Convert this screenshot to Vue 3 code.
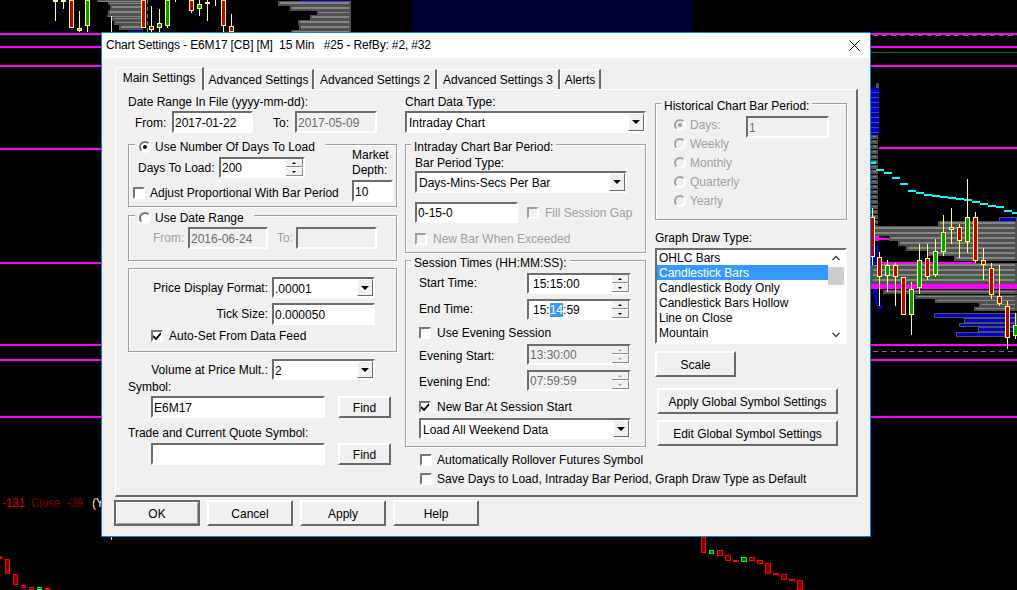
<script setup>
const titleText = 'Chart Settings - E6M17 [CB] [M]  15 Min   #25 - RefBy: #2, #32'
const rects = []
const add = (x, y, w, h, f) => rects.push({ x, y, w, h, f })

const grayBar = (x, y, r, h = 5) => {
  add(x, y, r - x, h, '#505050')
  add(x + 2, y + 1, r - x - 4, Math.max(1, h - 3), '#858585')
}

// top profiles
add(412, 0, 280, 32, '#000033')
;[[97,0,2],[108,2,3],[110,5,5],[108,10,5],[107,15,2],[112,17,4],[114,21,4],[119,25,5]].forEach(([x,y,h]) => grayBar(x,y,143,h))
add(128, 31, 15, 1, '#0000c8')
;[[278,1,5],[290,6,5],[317,11,4],[310,15,5],[298,20,5],[299,25,5],[291,30,2]].forEach(([x,y,h]) => grayBar(x,y,351,h))
add(300, 0, 50, 1, '#0000c8')
add(111, 16, 1, 16, '#e0e0e0')

// right profile
for (let y = 88; y < 135; y += 5) { add(871, y, 8, 4, '#0000c8'); add(871, y + 4, 8, 1, '#505050') }
add(876, 83, 3, 5, '#505050')
for (let y = 135; y < 226; y += 5) grayBar(871, y, 878, 4)
;[[938,221],[871,226],[871,231],[889,236],[898,241],[906,246],[927,251],[954,256]].forEach(([x,y]) => grayBar(x,y,1017))
for (let y = 263; y < 284; y += 5) grayBar(871, y, 1017)
;[[883,290],[915,295],[935,299],[979,303],[974,307]].forEach(([x,y]) => grayBar(x,y,1017,4))
for (let y = 246; y < 263; y += 5) { add(871, y, 8, 4, '#0000c8') }
;[[873,290],[874,295],[875,300],[877,305]].forEach(([x,y]) => add(x, y, 5, 4, '#0000c8'))
;[[999,217,1017,5],[934,313,1017,5],[964,318,1017,5],[959,323,1017,4],[978,327,1017,5],[956,332,1005,5]].forEach(([x,y,r,h]) => {
  add(x, y, r - x, h, '#505050')
  add(x + 1, y + 1, r - x - 2, h - 2, '#0000d0')
})

// magenta and green lines
;[33,46,65,148,262,344,359,416].forEach(y => add(0, y, 101, 2, '#ff00ff'))
;[33,46,65,344,359,416].forEach(y => add(871, y, 146, 2, '#ff00ff'))
add(879, 147, 138, 2, '#ff00ff')
add(871, 52, 146, 1, '#008000')
add(871, 236, 8, 5, '#ff00ff')
add(879, 238, 10, 2, '#ff00ff')
add(882, 262, 94, 2, '#ff00ff')
add(871, 284, 146, 5, '#ff00ff')
add(871, 277, 146, 1, '#208020')

// cyan dashes
;[[871,162,5],[876,169,8],[884,172,8],[892,177,8],[900,183,8],[908,190,8],[916,192,8],[924,194,8],[932,195,8],[940,196,8],[948,197,8],[956,198,8],[964,199,8],[972,201,8],[980,203,8],[988,205,8],[996,206,8],[1004,210,8],[1012,212,5]].forEach(([x,y,w]) => add(x, y, w, 2, '#00ffff'))

// candles
const candle = (cx, t, b, wt, wb, f, edge = '#ffff80') => {
  if (wt != null) add(cx, wt, 1, wb - wt, edge)
  add(cx - 2, t, 5, b - t, edge)
  if (b - t > 2) add(cx - 1, t + 1, 3, b - t - 2, f)
}
const R = '#c00000', G = '#00a000'
;[
  [872,217,257,208,265,R],[879,257,277,252,306,R],[887,265,276,260,292,G],[895,265,277,263,306,R],[903,277,315,null,null,R],
  [911,289,315,282,335,G],[919,260,288,244,294,G],[927,258,277,244,280,R],[935,251,275,239,277,G],[943,232,252,215,256,G],
  [951,227,230,208,244,G],[959,227,241,224,258,R],[967,217,242,179,253,G],[975,217,261,212,263,R],[983,260,265,248,280,R],
  [991,268,295,263,299,R],[999,296,304,265,306,R],[1007,306,338,301,349,R],[1015,325,336,313,339,G],
  [55,0,2,0,21,R],[63,0,2,0,9,G],[71,0,28,null,null,R],[79,28,31,11,32,'#c0c000'],[87,0,26,0,32,G],
  [143,0,28,null,null,R],[151,26,30,6,32,R],[159,23,28,9,32,G],[167,0,26,0,28,G],[191,0,11,0,13,R],[199,4,9,0,16,G],
  [207,2,4,0,21,'#c0c000'],[223,0,26,0,32,R],[231,26,32,14,32,R]
].forEach(c => candle(...c))
add(175, 0, 1, 2, '#ffff80')
add(215, 0, 1, 6, '#ffff80')

// lower candles (no yellow outline)
const low = (x, y, w, h, edge, f) => {
  add(x, y, w, h, edge)
  if (h > 2) add(x + 1, y + 1, w - 2, h - 2, f)
}
;[
  [0,556,2,3,'#f00','#400000'],[5,559,5,15,'#f00','#800000'],[13,574,5,11,'#f00','#800000'],[21,585,5,3,'#f00','#400000'],[29,587,5,3,'#f00','#400000'],
  [37,587,5,3,'#0f0','#006000'],[45,588,5,2,'#f00','#400000'],
  [701,537,5,16,'#f00','#800000'],[709,550,5,4,'#0f0','#006000'],[717,550,6,6,'#f00','#600000'],[725,555,6,6,'#f00','#600000'],[733,560,6,2,'#f00','#600000'],
  [741,557,6,5,'#0f0','#006000'],[749,557,6,4,'#f00','#600000'],[757,560,6,4,'#f00','#600000'],[765,563,6,11,'#f00','#800000'],[773,573,6,2,'#f00','#600000'],
  [781,574,6,6,'#f00','#600000'],[789,579,6,2,'#f00','#600000'],[797,580,6,10,'#f00','#800000']
].forEach(c => low(...c))
add(111, 537, 1, 3, '#e0e0e0')
</script>

<template>
  <div class="scene">
    <svg class="chart" width="1017" height="590" shape-rendering="crispEdges">
      <rect v-for="(r, i) in rects" :key="i" :x="r.x" :y="r.y" :width="r.w" :height="r.h" :fill="r.f" />
      <line x1="147" y1="0" x2="147" y2="32" stroke="#808080" stroke-dasharray="4 3" />
      <line x1="873" y1="35.5" x2="1017" y2="35.5" stroke="#707070" stroke-dasharray="5 4" />
      <line x1="873" y1="351.5" x2="1015" y2="351.5" stroke="#707070" stroke-dasharray="5 4" />
    </svg>

    <div class="legend"><span class="lg-red">-131</span><span class="lg-dark">Close: -39</span><span class="lg-y">(Y</span></div>

    <div class="dialog">
      <div class="titlebar">
        <span class="title">{{ titleText }}</span>
        <svg class="close" width="11" height="11" viewBox="0 0 11 11"><path d="M.5.5l10 10M10.5.5l-10 10" stroke="#000" fill="none" /></svg>
      </div>

      <div class="body">
        <div class="tabs">
          <div class="tab active t1">Main Settings</div>
          <div class="tab t2">Advanced Settings</div>
          <div class="tab t3">Advanced Settings 2</div>
          <div class="tab t3">Advanced Settings 3</div>
          <div class="tab t4">Alerts</div>
        </div>

        <div class="panel">
          <!-- left column -->
          <div class="col">
            <div class="label">Date Range In File (yyyy-mm-dd):</div>
            <div class="row mt2">
              <span class="lbl-from dn1">From:</span>
              <div class="field w81">2017-01-22</div>
              <span class="lbl-to dn1">To:</span>
              <div class="field off w82">2017-05-09</div>
            </div>

            <div class="group g-days">
              <div class="cap cap-radio"><i class="radio on"></i>Use Number Of Days To Load</div>
              <div class="days-main">
                <div class="row days-row">
                  <span class="lbl-days">Days To Load:</span>
                  <div class="field spin w86 h21">
                    <span class="grow">200</span>
                    <div class="spinner"><b class="up"><i></i></b><b class="dn"><i></i></b></div>
                  </div>
                </div>
                <div class="row check-row adjust"><i class="check"></i>Adjust Proportional With Bar Period</div>
              </div>
              <div class="depth">
                <div class="lh15">Market</div>
                <div class="lh15">Depth:</div>
                <div class="field depth-input">10</div>
              </div>
            </div>

            <div class="group g-range">
              <div class="cap cap-radio"><i class="radio"></i>Use Date Range</div>
              <div class="row range-row">
                <span class="dim lbl-rf">From:</span>
                <div class="field off w80">2016-06-24</div>
                <span class="dim lbl-rt">To:</span>
                <div class="field off w81"></div>
              </div>
            </div>

            <div class="group g-price">
              <div class="row">
                <span class="lbl-r">Price Display Format:</span>
                <div class="field sel w103 h21"><span class="grow">.00001</span><b class="arrow"><i></i></b></div>
              </div>
              <div class="row mt5">
                <span class="lbl-r">Tick Size:</span>
                <div class="field w103">0.000050</div>
              </div>
              <div class="row check-row auto"><i class="check yes"><svg width="8" height="8" viewBox="0 0 8 8"><path d="M0 4l3 3 5-6" fill="none" stroke="#000" stroke-width="1.8" /></svg></i>Auto-Set From Data Feed</div>
            </div>

            <div class="row vol-row">
              <span class="lbl-r">Volume at Price Mult.:</span>
              <div class="field sel w103 h21"><span class="grow">2</span><b class="arrow"><i></i></b></div>
            </div>
            <div class="label sym">Symbol:</div>
            <div class="row mt2 sym-row">
              <div class="field w174">E6M17</div>
              <div class="btn find">Find</div>
            </div>
            <div class="label trade">Trade and Current Quote Symbol:</div>
            <div class="row mt3 sym-row">
              <div class="field w174"></div>
              <div class="btn find">Find</div>
            </div>
          </div>

          <!-- middle column -->
          <div class="col">
            <div class="label">Chart Data Type:</div>
            <div class="field sel full mt2"><span class="grow pl">Intraday Chart</span><b class="arrow"><i></i></b></div>

            <div class="group g-bar">
              <div class="cap">Intraday Chart Bar Period:</div>
              <div class="label">Bar Period Type:</div>
              <div class="field sel w212 mt1"><span class="grow pl">Days-Mins-Secs Per Bar</span><b class="arrow"><i></i></b></div>
              <div class="row mt9">
                <div class="field w103 h21">0-15-0</div>
                <div class="row check-row dim fill"><i class="check off"></i>Fill Session Gap</div>
              </div>
              <div class="row check-row dim mt8"><i class="check off"></i>New Bar When Exceeded</div>
            </div>

            <div class="group g-session">
              <div class="cap">Session Times (HH:MM:SS):</div>
              <div class="row">
                <span class="lbl-time up1">Start Time:</span>
                <div class="field spin w104 h21"><span class="grow pl2">15:15:00</span><div class="spinner"><b class="up"><i></i></b><b class="dn"><i></i></b></div></div>
              </div>
              <div class="row mt5">
                <span class="lbl-time up1">End Time:</span>
                <div class="field spin w104 h21"><span class="grow pl2">15:<em class="hl">14</em>:59</span><div class="spinner"><b class="up"><i></i></b><b class="dn"><i></i></b></div></div>
              </div>
              <div class="row check-row mt5"><i class="check"></i>Use Evening Session</div>
              <div class="row mt3">
                <span class="lbl-time dn1">Evening Start:</span>
                <div class="field off spin w104 h21"><span class="grow">13:30:00</span><div class="spinner off"><b class="up"><i></i></b><b class="dn"><i></i></b></div></div>
              </div>
              <div class="row mt5">
                <span class="lbl-time dn1">Evening End:</span>
                <div class="field off spin w104 h21"><span class="grow">07:59:59</span><div class="spinner off"><b class="up"><i></i></b><b class="dn"><i></i></b></div></div>
              </div>
              <div class="row check-row mt8"><i class="check yes"><svg width="8" height="8" viewBox="0 0 8 8"><path d="M0 4l3 3 5-6" fill="none" stroke="#000" stroke-width="1.8" /></svg></i>New Bar At Session Start</div>
              <div class="field sel w212 h21 mt3"><span class="grow pl">Load All Weekend Data</span><b class="arrow"><i></i></b></div>
            </div>

            <div class="row check-row roll"><i class="check"></i>Automatically Rollover Futures Symbol</div>
            <div class="row check-row save"><i class="check"></i>Save Days to Load, Intraday Bar Period, Graph Draw Type as Default</div>
          </div>

          <!-- right column -->
          <div class="col">
            <div class="group g-hist">
              <div class="cap">Historical Chart Bar Period:</div>
              <div class="hist-list dim">
                <div class="hist-row"><i class="radio off on"></i>Days:</div>
                <div class="hist-row"><i class="radio off"></i>Weekly</div>
                <div class="hist-row"><i class="radio off"></i>Monthly</div>
                <div class="hist-row"><i class="radio off"></i>Quarterly</div>
                <div class="hist-row"><i class="radio off"></i>Yearly</div>
              </div>
              <div class="field off w83 hist-input">1</div>
            </div>

            <div class="label graph">Graph Draw Type:</div>
            <div class="field listbox">
              <div class="items">
                <div class="item">OHLC Bars</div>
                <div class="item sel-item">Candlestick Bars</div>
                <div class="item">Candlestick Body Only</div>
                <div class="item">Candlestick Bars Hollow</div>
                <div class="item">Line on Close</div>
                <div class="item">Mountain</div>
              </div>
              <div class="scroll">
                <svg width="16" height="17" viewBox="0 0 16 17"><path d="M4.500 10l3.500-3.500L11.500 10" fill="none" stroke="#404040" stroke-width="1.500" /></svg>
                <div class="thumb"></div>
                <div class="track"></div>
                <svg width="16" height="15" viewBox="0 0 16 15"><path d="M4.500 6l3.500 3.500L11.500 6" fill="none" stroke="#404040" stroke-width="1.500" /></svg>
              </div>
            </div>
            <div class="btn scale">Scale</div>
            <div class="btn global first">Apply Global Symbol Settings</div>
            <div class="btn global next">Edit Global Symbol Settings</div>
          </div>
        </div>

        <div class="footer">
          <div class="btn foot default">OK</div>
          <div class="btn foot">Cancel</div>
          <div class="btn foot">Apply</div>
          <div class="btn foot">Help</div>
        </div>
      </div>
    </div>
  </div>
</template>

<style>
html, body { margin: 0; background: #000; overflow: hidden; }
</style>

<style scoped>
.scene { position: relative; width: 1017px; height: 590px; overflow: hidden; background: #000; font-family: "Liberation Sans", Arial, sans-serif; font-size: 12px; color: #000; }
.chart { position: absolute; left: 0; top: 0; display: block; }
.legend { position: absolute; left: 2px; top: 495px; font-size: 12px; letter-spacing: -0.3px; line-height: 16px; white-space: nowrap; display: flex; }
.lg-red { color: #e00000; width: 29px; }
.lg-dark { color: #800000; width: 61px; }
.lg-y { color: #ffe9a8; }

.dialog { position: absolute; left: 101px; top: 32px; width: 770px; height: 505px; box-sizing: border-box; border: 1px solid #0a84e0; background: #f0f0f0; display: flex; flex-direction: column; overflow: hidden; }
.titlebar { height: 25px; flex: none; background: #fff; display: flex; align-items: center; padding: 0 10px 0 4px; }
.title { white-space: pre; font-size: 12px; letter-spacing: -0.15px; flex: 1; margin-bottom: 2px; }
.close { display: block; }

.body { flex: 1; padding: 9px 0 0 13px; }
.tabs { display: flex; height: 22px; align-items: flex-end; position: relative; z-index: 1; }
.tab { box-sizing: border-box; height: 20px; line-height: 20px; text-align: center; white-space: nowrap; border-top: 1px solid #fff; border-left: 1px solid #fff; border-right: 2px solid #696969; }
.tab.active { height: 23px; margin-bottom: -1px; background: #f0f0f0; line-height: 21px; border-right-width: 2px; }
.t1 { width: 89px; }
.t2 { width: 110px; }
.t3 { width: 123px; }
.t4 { width: 41px; }

.panel { box-sizing: border-box; width: 743px; height: 408px; border-top: 1px solid #fff; border-left: 1px solid #fff; border-right: 2px solid #696969; border-bottom: 2px solid #696969; padding: 3px 0 0 12px; display: grid; grid-template-columns: 269px 241px 192px; column-gap: 8px; align-items: start; }
.col { display: flex; flex-direction: column; align-items: flex-start; min-width: 0; }
.col:nth-child(3) { margin-left: 1px; }

.label { box-sizing: border-box; height: 16px; line-height: 16px; padding-top: 1px; white-space: nowrap; }
.row { display: flex; align-items: center; white-space: nowrap; }
.grow { flex: 1; min-width: 0; padding-top: 1px; }
.sel .grow { padding-top: 2px; }
.dim { color: #a0a0a0; }
.up1 { padding-bottom: 2px; }
.dn1 { padding-top: 2px; }
.mt1 { margin-top: 1px; }
.mt2 { margin-top: 2px; }
.mt3 { margin-top: 3px; }
.mt5 { margin-top: 5px; }
.mt8 { margin-top: 8px; }
.mt9 { margin-top: 9px; }
.pl { padding-left: 1px; }
.pl2 { padding-left: 3px; }
.lh15 { line-height: 15px; height: 15px; }

.field { box-sizing: border-box; height: 22px; border: 2px solid; border-color: #6d6d6d #fff #fff #6d6d6d; background: #fff; display: flex; align-items: center; padding: 1px 0 0 1px; white-space: nowrap; flex: none; }
.field.off { background: #f0f0f0; color: #6d6d6d; }
.field.sel, .field.spin { padding-top: 0; }
.h21 { height: 21px; }
.w80 { width: 80px; }
.w81 { width: 81px; }
.w82 { width: 82px; }
.w83 { width: 83px; }
.w86 { width: 86px; }
.w103 { width: 103px; }
.w104 { width: 104px; }
.w174 { width: 174px; }
.w212 { width: 212px; }
.full { width: 241px; }

.arrow { width: 16px; align-self: stretch; box-sizing: border-box; flex: none; background: #f0f0f0; border: 1px solid; border-color: #fff #696969 #696969 #fff; display: flex; align-items: center; justify-content: center; }
.arrow i { display: block; width: 0; height: 0; border-left: 4px solid transparent; border-right: 4px solid transparent; border-top: 4px solid #000; }
.spinner { width: 17px; align-self: stretch; display: flex; flex-direction: column; gap: 1px; background: #fff; flex: none; }
.spinner b { flex: 1; box-sizing: border-box; background: #f0f0f0; border-bottom: 1px solid #8a8a8a; border-right: 1px solid #8a8a8a; display: flex; align-items: center; justify-content: center; }
.spinner i { display: block; width: 0; height: 0; border-left: 2px solid transparent; border-right: 2px solid transparent; }
.spinner .up i { border-bottom: 2px solid #000; }
.spinner .dn i { border-top: 2px solid #000; }
.spinner.off .up i { border-bottom-color: #a0a0a0; }
.spinner.off .dn i { border-top-color: #a0a0a0; }

.radio { display: inline-block; box-sizing: border-box; width: 12px; height: 12px; border-radius: 50%; border: 2px solid; border-color: #777 #fff #fff #777; background: #fff; margin-right: 4px; position: relative; flex: none; }
.radio.on::after { content: ""; position: absolute; left: 2px; top: 2px; width: 4px; height: 4px; border-radius: 50%; background: #000; }
.radio.off { background: #f0f0f0; border-color: #a0a0a0 #fff #fff #a0a0a0; }
.radio.off.on::after { background: #a0a0a0; }
.check { display: flex; align-items: center; justify-content: center; box-sizing: border-box; width: 12px; height: 12px; border: 2px solid; border-color: #777 #fff #fff #777; background: #fff; margin-right: 6px; flex: none; }
.check.off { background: #f0f0f0; border-color: #a0a0a0 #fff #fff #a0a0a0; }
.check-row { height: 16px; }

.group { box-sizing: border-box; position: relative; border: 1px solid #a0a0a0; box-shadow: 1px 1px 0 #fff, inset 1px 1px 0 #fff; flex: none; }
.cap { position: absolute; left: 5px; top: -6px; height: 16px; line-height: 16px; padding: 0 3px; background: #f0f0f0; white-space: nowrap; }
.cap-radio { left: 6px; top: -6px; padding: 0 10px 0 4px; display: flex; align-items: center; }

.lbl-from { margin-left: 7px; width: 37px; }
.lbl-to { margin-left: 20px; width: 22px; }

.g-days { width: 269px; height: 63px; margin-top: 11px; display: flex; }
.days-main { flex: 1; padding: 12px 0 0 4px; }
.days-row { margin-left: 5px; }
.lbl-days { width: 81px; }
.adjust { margin-top: 7px; }
.adjust .check { margin-right: 5px; }
.depth { width: 41px; margin-right: 3px; padding-top: 3px; }
.depth-input { width: 41px; margin-top: 2px; }

.g-range { width: 269px; height: 46px; margin-top: 8px; padding: 11px 0 0 24px; }
.lbl-rf { width: 35px; }
.lbl-rt { margin-left: 9px; width: 19px; }

.g-price { width: 269px; height: 84px; margin-top: 7px; padding-top: 8px; }
.lbl-r { width: 140px; padding-right: 3px; box-sizing: border-box; text-align: right; margin-left: 3px; }
.auto { margin: 3px 0 0 22px; }
.vol-row { margin-top: 7px; }
.vol-row .lbl-r { margin-left: 3px; }
.g-price .lbl-r { margin-left: 2px; }
.g-price .field { margin-left: 1px; }
.vol-row .field { margin-left: 1px; }
.sym { margin-top: -2px; }
.sym-row { margin-left: 23px; }
.trade { margin-top: 6px; }
.find { width: 53px; height: 22px; margin-left: 13px; }

.btn { box-sizing: border-box; background: #f0f0f0; border: 2px solid; border-color: #fff #696969 #696969 #fff; padding-top: 1px; display: flex; align-items: center; justify-content: center; white-space: nowrap; flex: none; }

.g-bar { width: 241px; height: 109px; margin-top: 11px; padding: 9px 0 0 9px; }
.fill { margin-left: 9px; }
.g-session { width: 241px; height: 187px; margin-top: 7px; padding: 12px 0 0 13px; }
.lbl-time { width: 108px; }
.roll { margin: 5px 0 0 15px; }
.save { margin: 3px 0 0 15px; }
.roll .check, .save .check { margin-right: 5px; }

.hl { font-style: normal; background: #3399ff; color: #fff; }

.g-hist { width: 192px; height: 117px; margin-top: 10px; padding: 12px 0 0 18px; display: flex; align-items: flex-start; }
.hist-list { width: 72px; margin-top: -1px; }
.hist-row { height: 19px; display: flex; align-items: center; white-space: nowrap; }
.graph { margin-top: 10px; padding-top: 0; }
.listbox { width: 192px; height: 96px; margin-top: 2px; padding: 0; align-items: stretch; }
.items { flex: 1; min-width: 0; }
.item { height: 15px; line-height: 17px; padding-left: 2px; }
.sel-item { background: #3399ff; color: #fff; }
.scroll { width: 16px; margin-right: 1px; background: #fff; display: flex; flex-direction: column; flex: none; }
.scroll svg { display: block; flex: none; }
.thumb { height: 18px; background: #cdcdcd; flex: none; }
.track { flex: 1; }
.scale { width: 81px; height: 26px; margin-top: 7px; }
.global { width: 181px; height: 26px; margin-left: 2px; }
.first { margin-top: 11px; }
.next { margin-top: 6px; }

.footer { display: flex; gap: 7px; padding-top: 3px; margin-left: -1px; }
.foot { width: 86px; height: 26px; }
.default { border-color: #696969; box-shadow: inset 1px 1px 0 #fff, inset -1px -1px 0 #a0a0a0; }
</style>
